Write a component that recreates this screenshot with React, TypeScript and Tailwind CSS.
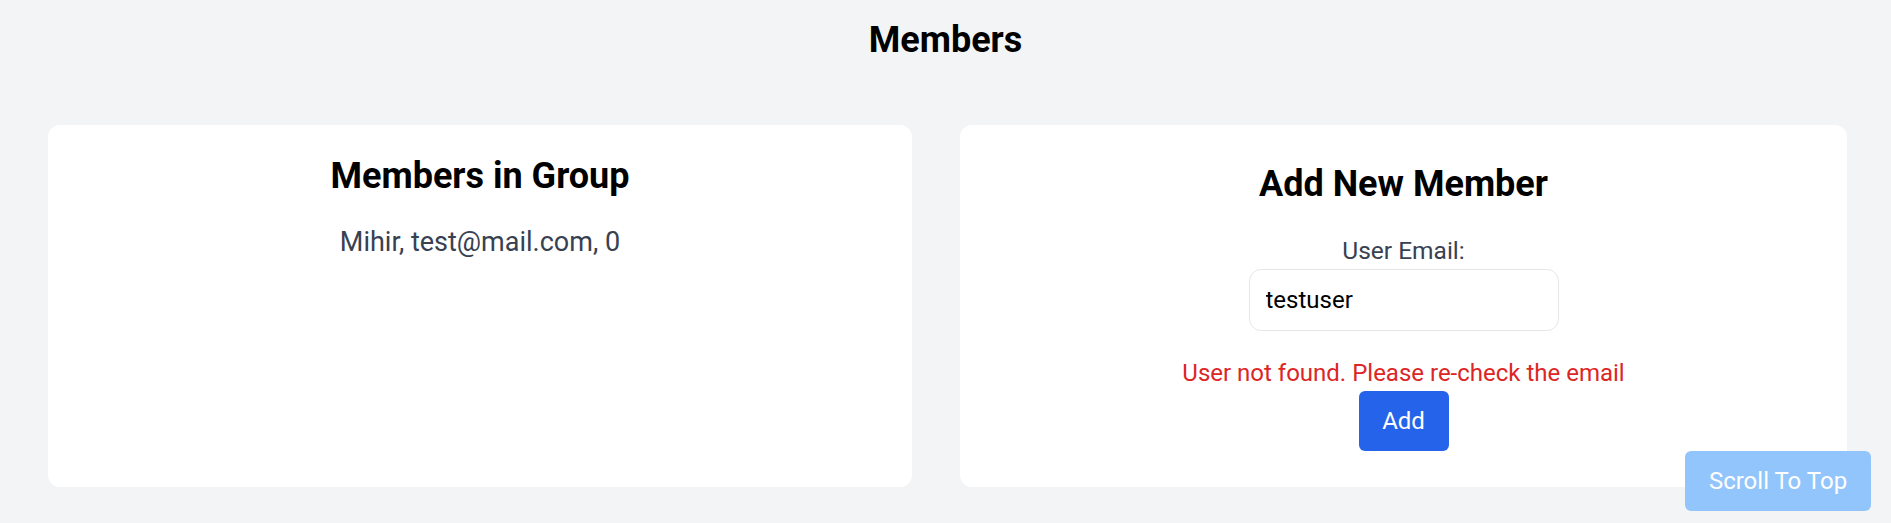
import { useState } from "react";

export default function App() {
  const [email, setEmail] = useState("testuser");

  return (
    <div className="min-h-screen bg-[#f3f4f6] font-['Roboto',sans-serif] relative">
      <h1 className="pt-5 text-center text-[36px] leading-[40px] font-bold text-black">Members</h1>

      <div className="mt-[65px] flex items-stretch gap-12 pl-12 pr-11">
        <div className="w-[864px] bg-white rounded-xl pt-[31px] flex flex-col items-center">
          <h2 className="text-[36px] leading-[40px] font-bold text-black">Members in Group</h2>
          <p className="mt-[30px] text-[27px] leading-[32px] text-[#374151]">Mihir, test@mail.com, 0</p>
        </div>

        <div className="flex-1 bg-white rounded-xl pt-[39px] pb-9 flex flex-col items-center">
          <h2 className="text-[36px] leading-[40px] font-bold text-black">Add New Member</h2>
          <label className="mt-[31px] text-[24.5px] leading-[32px] text-[#374151]">User Email:</label>
          <input
            value={email}
            onChange={(e) => setEmail(e.target.value)}
            className="mt-[2px] w-[310px] h-[62px] rounded-xl border border-[#e5e7eb] px-4 text-[24px] text-black outline-none"
          />
          <p className="mt-[26px] text-[24px] leading-[32px] text-[#dc2626]">User not found. Please re-check the email</p>
          <button className="mt-[2px] w-[90px] h-[60px] rounded-md bg-[#2563eb] text-white text-[24px]">Add</button>
        </div>
      </div>

      <button className="absolute right-5 bottom-3 w-[186px] h-[60px] rounded-md bg-[#93c5fd] text-white text-[24px]">
        Scroll To Top
      </button>
    </div>
  );
}
